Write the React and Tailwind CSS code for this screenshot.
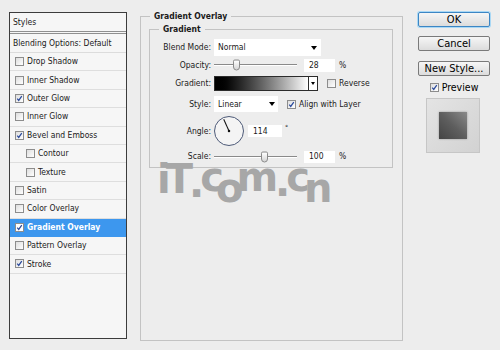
import React from 'react'

const UI = { fontFamily: '"DejaVu Sans Condensed", "DejaVu Sans", sans-serif' }

const STYLE_ROWS = [
  { label: 'Drop Shadow' },
  { label: 'Inner Shadow' },
  { label: 'Outer Glow', checked: true },
  { label: 'Inner Glow' },
  { label: 'Bevel and Emboss', checked: true },
  { label: 'Contour', sub: true },
  { label: 'Texture', sub: true },
  { label: 'Satin' },
  { label: 'Color Overlay' },
  { label: 'Gradient Overlay', checked: true, active: true },
  { label: 'Pattern Overlay' },
  { label: 'Stroke', checked: true },
]

function Check({ checked, light }) {
  return (
    <span className={`w-[9px] h-[9px] border border-[#8d8d8d] flex items-center justify-center shrink-0 ${light ? 'bg-white' : 'bg-gradient-to-br from-[#dedede] to-white'}`}>
      {checked && (
        <svg viewBox="0 0 8 8" className="w-[7px] h-[7px]">
          <path d="M1.4 4.2 L3.1 6.2 L6.6 1.2" stroke="#2b4a9c" strokeWidth="1.4" fill="none" />
        </svg>
      )}
    </span>
  )
}

function Arrow() {
  return <span className="w-0 h-0 border-x-[3.5px] border-x-transparent border-t-[4px] border-t-black" />
}

function Slider({ thumb }) {
  return (
    <div className="relative w-[83px] h-full ml-[3px] flex items-center">
      <div className="w-full h-[2px] border-t border-[#8a8a8a] border-b border-b-white" />
      <div
        className="absolute top-1/2 -translate-y-1/2 w-[7px] h-[11px] rounded-[2px] rounded-b-[4px] border border-[#8a8a8a] bg-gradient-to-b from-white to-[#d4d4d4]"
        style={{ left: thumb }}
      />
    </div>
  )
}

function Label({ children }) {
  return <span className="w-[61px] text-right shrink-0">{children}</span>
}

function Button({ children, focus }) {
  return (
    <button
      className={`w-[72px] h-[15px] rounded-[2px] border text-[11px] leading-none text-black bg-gradient-to-b from-[#f6f6f6] to-[#dcdcdc] flex items-center justify-center ${focus ? 'border-[#3c86c4] shadow-[0_0_0_1px_#a9d8f5]' : 'border-[#7a7a7a]'}`}
    >
      {children}
    </button>
  )
}

export default function App() {
  return (
    <div className="relative w-[500px] h-[350px] bg-[#ededed] overflow-hidden flex items-start text-[8.5px] text-[#1a1a1a]" style={UI}>
      {/* styles list */}
      <div className="ml-[9px] mt-[12px] w-[118px] h-[327px] border border-[#3c3c3c] bg-[#f6f6f6] flex flex-col">
        <div className="h-[21px] pl-[3px] flex items-center border-b-[3px] border-double border-[#8f8f8f]">Styles</div>
        <div className="h-[19px] pl-[3px] flex items-center border-b border-[#dcdcdc]">Blending Options: Default</div>
        {STYLE_ROWS.map(r => (
          <div
            key={r.label}
            className={`h-[18.4px] flex items-center gap-[3px] border-b ${r.sub ? 'pl-[16px]' : 'pl-[5px]'} ${r.active ? 'bg-[#3d97ee] text-white font-bold border-[#3d97ee]' : 'border-[#dedede]'}`}
          >
            <Check checked={r.checked} light={r.active} />
            <span>{r.label}</span>
          </div>
        ))}
      </div>

      {/* gradient overlay */}
      <fieldset className="ml-[13px] mt-[10px] w-[263px] h-[331px] border border-[#c3c3c3] pl-[8px]">
        <legend className="ml-[1px] px-[4px] h-[12px] leading-[12px] font-bold">Gradient Overlay</legend>
        <fieldset className="mt-[1px] w-[244px] h-[145px] border border-[#c3c3c3]">
          <legend className="ml-[9px] px-[4px] h-[12px] leading-[12px] font-bold">Gradient</legend>

          <div className="mt-[4px] h-[17px] flex items-center">
            <Label>Blend Mode:</Label>
            <div className="ml-[3px] w-[107px] h-full bg-white pl-[4px] pr-[4px] flex items-center justify-between">
              <span>Normal</span>
              <Arrow />
            </div>
          </div>

          <div className="mt-[2px] h-[14px] flex items-center">
            <Label>Opacity:</Label>
            <Slider thumb={19} />
            <div className="ml-[7px] w-[31px] h-[13px] bg-white pl-[5px] flex items-center">28</div>
            <span className="ml-[4px]">%</span>
          </div>

          <div className="mt-[4px] h-[15px] flex items-center">
            <Label>Gradient:</Label>
            <div className="ml-[3px] w-[104px] h-full border border-[#2c2c2c] flex">
              <div className="flex-1 bg-gradient-to-r from-black to-white" />
              <div className="w-[9px] border-l border-[#2c2c2c] bg-white flex items-center justify-center">
                <span className="w-0 h-0 border-x-[2.5px] border-x-transparent border-t-[3px] border-t-black" />
              </div>
            </div>
            <span className="ml-[9px]"><Check /></span>
            <span className="ml-[3px]">Reverse</span>
          </div>

          <div className="mt-[5px] h-[16px] flex items-center">
            <Label>Style:</Label>
            <div className="ml-[3px] w-[64px] h-full bg-white pl-[4px] pr-[3px] flex items-center justify-between">
              <span>Linear</span>
              <Arrow />
            </div>
            <span className="ml-[9px]"><Check checked /></span>
            <span className="ml-[3px]">Align with Layer</span>
          </div>

          <div className="mt-[4px] h-[30px] flex items-center">
            <Label>Angle:</Label>
            <div className="ml-[3px] w-[30px] h-[30px] rounded-full border-[1.5px] border-[#4d5a78] bg-[#f4f4f4]">
              <svg viewBox="0 0 27 27" className="w-full h-full">
                <line x1="13.5" y1="13.5" x2="8.4" y2="2.2" stroke="#111" strokeWidth="1" />
                <circle cx="13.5" cy="13.5" r="1.2" fill="#111" />
              </svg>
            </div>
            <div className="ml-[4px] w-[34px] h-[12px] bg-white pl-[5px] flex items-center">114</div>
            <span className="ml-[3px] self-start mt-[7px] text-[7px]">°</span>
          </div>

          <div className="mt-[4px] h-[13px] flex items-center">
            <Label>Scale:</Label>
            <Slider thumb={47} />
            <div className="ml-[7px] w-[31px] h-[12px] bg-white pl-[5px] flex items-center">100</div>
            <span className="ml-[4px]">%</span>
          </div>
        </fieldset>
      </fieldset>

      {/* buttons */}
      <div className="ml-[15px] flex flex-col">
        <div className="mt-[12px]"><Button focus>OK</Button></div>
        <div className="mt-[9px]"><Button>Cancel</Button></div>
        <div className="mt-[10px]"><Button>New Style...</Button></div>
        <div className="mt-[6px] h-[11px] flex items-center justify-center gap-[3px] text-[10.5px] text-black">
          <Check checked />
          <span>Preview</span>
        </div>
        <div className="mt-[5px] ml-[8px] w-[54px] h-[55px] border border-[#c6c6c6] bg-gradient-to-br from-[#e4e4e4] to-[#d2d2d2] flex items-center justify-center">
          <div className="w-[28px] h-[27px] bg-gradient-to-tr from-[#444] via-[#5e5e5e] to-[#8a8a8a] shadow-[0_0_2px_#999]" />
        </div>
      </div>

      {/* watermark */}
      <div className="absolute left-[157px] top-[159px] flex items-start text-[#a7a7a7] font-bold text-[40px] leading-none tracking-[-1px]" style={{ fontFamily: '"DejaVu Sans", sans-serif' }}>
        <span>i</span>
        <span className="-ml-[4px]">T</span>
        <span className="mt-[4px] -ml-[3px]">.</span>
        <span className="-mt-[2px] -ml-[3px]">c</span>
        <span className="mt-[9px] -ml-[7px]">o</span>
        <span className="-mt-[2px] -ml-[6px]">m</span>
        <span className="mt-[3px] -ml-[2px]">.</span>
        <span className="-mt-[2px] -ml-[3px]">c</span>
        <span className="mt-[9px] -ml-[5px]">n</span>
      </div>
    </div>
  )
}
